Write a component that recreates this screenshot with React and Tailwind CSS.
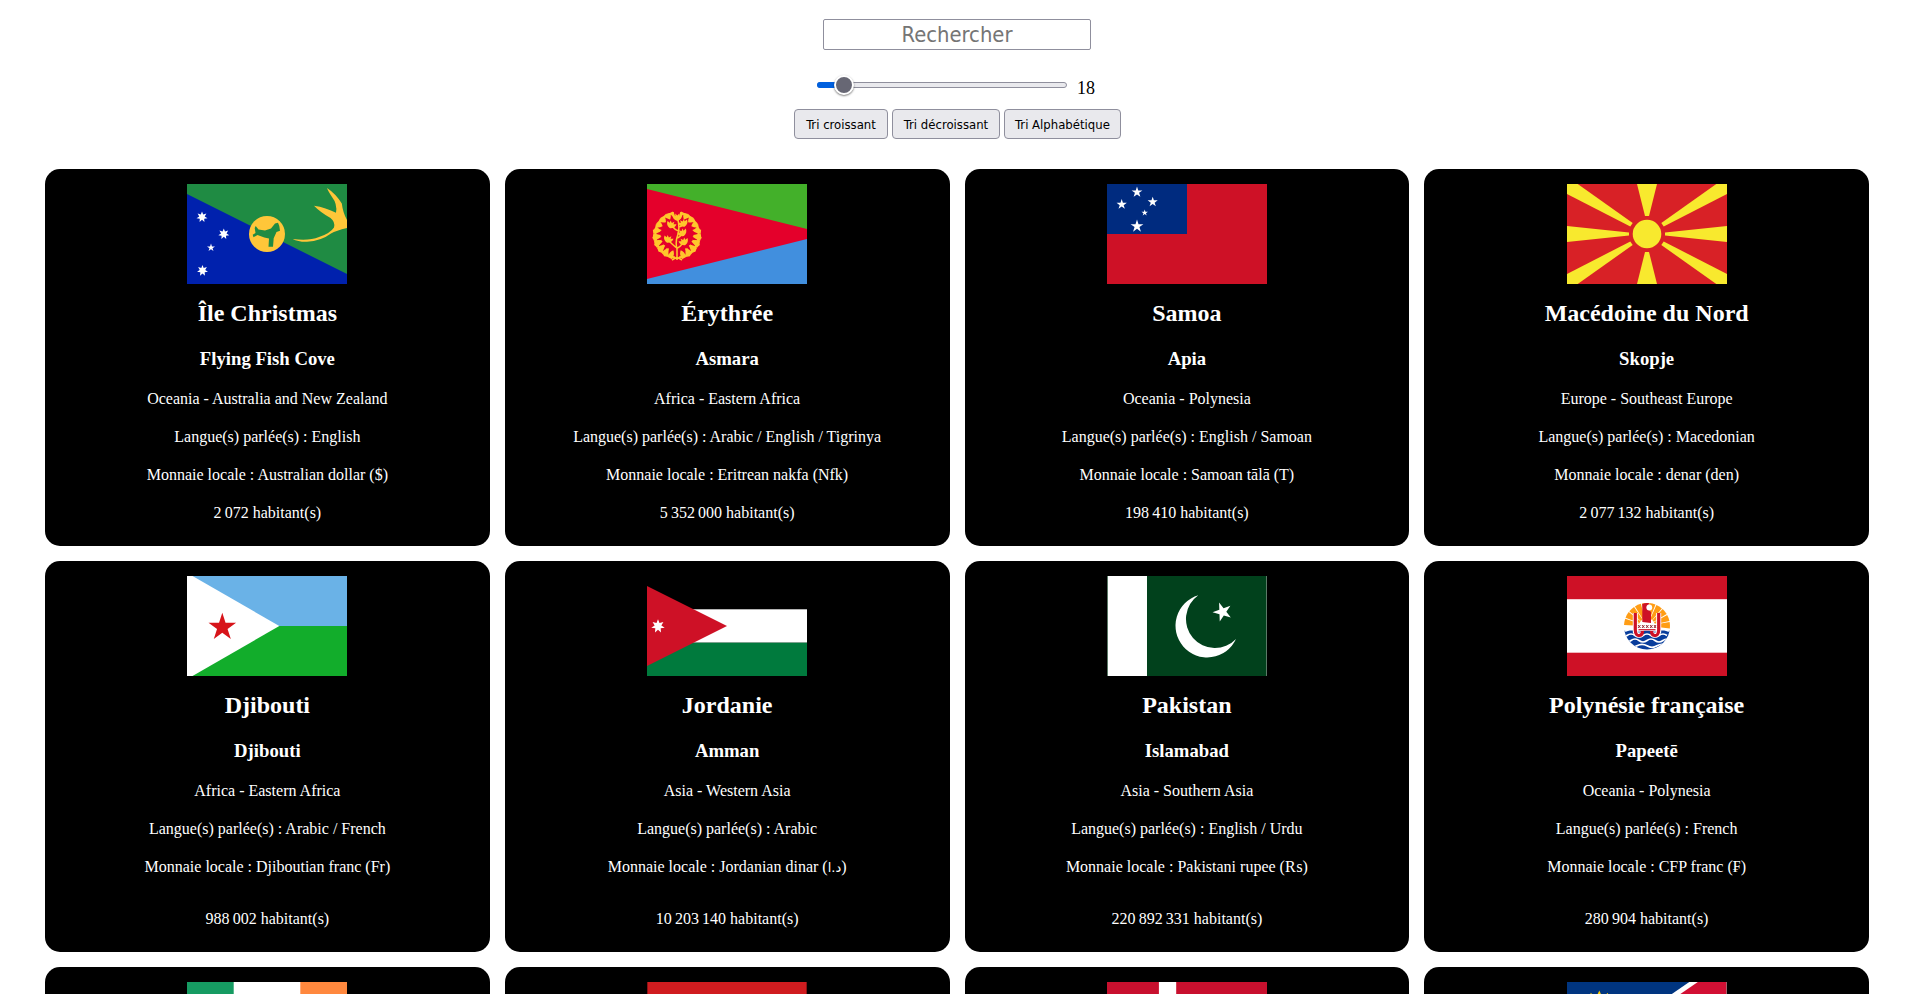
import React from "react";

function starPoints(cx, cy, r, n = 5, inner = 0.382, start = -90) {
  const pts = [];
  for (let i = 0; i < n * 2; i++) {
    const a = ((start + (i * 180) / n) * Math.PI) / 180;
    const rad = i % 2 ? r * inner : r;
    pts.push(`${(cx + rad * Math.cos(a)).toFixed(2)},${(cy + rad * Math.sin(a)).toFixed(2)}`);
  }
  return pts.join(" ");
}

function Star({ x, y, r, n, inner, start, fill = "#fff" }) {
  return <polygon points={starPoints(x, y, r, n, inner, start)} fill={fill} />;
}

function Christmas() {
  return (
    <>
      <rect width="160" height="100" fill="#1f8b43" />
      <path d="M0 10L160 90V100H0z" fill="#0021ad" />
      <Star x={15} y={33} r={5.6} n={7} inner={0.5} />
      <Star x={36.8} y={50} r={5.6} n={7} inner={0.5} />
      <Star x={24} y={63.7} r={4.2} />
      <Star x={15.5} y={86.6} r={5.6} n={7} inner={0.5} />
      <circle cx="80" cy="50" r="18" fill="#ffc639" />
      <path d="M68.7 42L71.5 45.5L78 46.5L84 44.5L88 39.5L91 38.8L92.3 42L93 46.7L89.5 48L86.7 54.3L86 62.7H81.5L82 54.5L77.3 53.5L70.5 51L66.5 53.2L65.7 50.7L68.5 49L67.7 44z" fill="#1f8b43" />
      <path d="M105.7 55Q122 57.2 132 53Q143 49.5 147 43.5Q148.5 38 143.5 34Q133 28 127 21.7Q139 23.5 149 28.8Q150.5 20 145 13Q141 7 140 4Q149 10 154.8 19.5Q156 29 160 36V44Q149 46.500 144 49.500Q134 57 120 57.800Q111 58 105.700 55z" fill="#ffc639" />
    </>
  );
}

function Eritrea() {
  const leaves = [];
  for (let i = 0; i < 9; i++) {
    const deg = 22 + i * 17.5;
    const a = (deg * Math.PI) / 180;
    leaves.push({ x: 21 * Math.sin(a), y: 21 * Math.cos(a), deg, k: i < 5 ? 1.1 : 0.85 });
  }
  const twigs = [
    [24.5, 40, 20], [36, 38.5, -20], [35, 48, -25], [21.5, 54.5, 20], [36.5, 57, -20], [30.3, 32.5, 0],
  ];
  return (
    <>
      <rect width="160" height="50" fill="#43b02a" />
      <rect y="50" width="160" height="50" fill="#418fde" />
      <path d="M0 5L160 45V55L0 95z" fill="#e4002b" />
      <g fill="#ffc72c">
        {[1, -1].map((s) => (
          <g key={s} transform={`translate(30 51) scale(${s} 1)`}>
            {leaves.map((l) => (
              <g key={l.deg} transform={`translate(${l.x} ${l.y}) rotate(${-l.deg}) scale(${l.k})`}>
                <path d="M-4 3Q-5-2-2-5Q1-2 .3 2.500z" />
                <path d="M4 3Q5.500-2 4-5Q.5-2 .3 2.500z" />
              </g>
            ))}
          </g>
        ))}
        {twigs.map(([x, y, r]) => (
          <path key={`${x}-${y}`} transform={`translate(${x} ${y}) rotate(${r})`} d="M0 4.500Q-4.800 3-4.800-1.500L-2-.5L-2-3L0-1L2-3L2-.5L4.800-1.500Q4.800 3 0 4.500z" />
        ))}
      </g>
      <path d="M30 76V65Q28 58 31 50Q33 43 30.500 34M30 64Q27 62 22 57M30.500 64Q33 63 36 59M30.500 54Q33 53 35 50M31.500 47Q28 46 25 42M32 43Q34 43 36 40M25 76L30 73L35 76" fill="none" stroke="#ffc72c" strokeWidth="1.5" />
      <path d="M28 73.500A22.500 22.500 0 0 1 27 29M32 73.500A22.500 22.500 0 0 0 33 29" fill="none" stroke="#ffc72c" strokeWidth="2" />
    </>
  );
}

function Samoa() {
  return (
    <>
      <rect width="160" height="100" fill="#ce1126" />
      <rect width="80" height="50" fill="#002b7f" />
      <Star x={30} y={8.2} r={5.7} />
      <Star x={14.7} y={20.5} r={5.4} />
      <Star x={45.7} y={18} r={5.3} />
      <Star x={37.7} y={28.8} r={3.4} />
      <Star x={30} y={42.3} r={6.7} />
    </>
  );
}

function Macedonia() {
  const ray = "M0 0H10.7L65.7 39L63.3 42.500L0 10z";
  return (
    <>
      <rect width="160" height="100" fill="#d82126" />
      <g fill="#f8e92e">
        <path d="M70 0H90L82 32H78zM70 100H90L82 68H78zM0 42L62 48.500V51.500L0 58zM160 42L98 48.500V51.500L160 58z" />
        <path d={ray} />
        <path d={ray} transform="matrix(-1 0 0 1 160 0)" />
        <path d={ray} transform="matrix(1 0 0 -1 0 100)" />
        <path d={ray} transform="matrix(-1 0 0 -1 160 100)" />
        <circle cx="80" cy="50" r="14.3" />
      </g>
    </>
  );
}

function DjiboutiFlag() {
  return (
    <>
      <rect width="160" height="50" fill="#6ab2e7" />
      <rect y="50" width="160" height="50" fill="#12ad2b" />
      <path d="M0 0H5.500L92.300 50L5.500 100H0z" fill="#fff" />
      <Star x={35.3} y={51.2} r={14.5} fill="#d7141a" />
    </>
  );
}

function Jordan() {
  return (
    <>
      <rect width="160" height="100" fill="#000" />
      <rect y="33.300" width="160" height="33.400" fill="#fff" />
      <rect y="66.700" width="160" height="33.300" fill="#007a3d" />
      <path d="M0 10L80 50L0 90z" fill="#ce1126" />
      <Star x={11} y={50.2} r={6.9} n={7} inner={0.5} />
    </>
  );
}

function PakistanFlag() {
  return (
    <>
      <rect width="160" height="100" fill="#01411c" />
      <rect width="40" height="100" fill="#fff" />
      <path d="M91.300 19.300A31.700 31.700 0 1 0 129 63A29 29 0 1 1 91.300 19.300z" fill="#fff" />
      <path d="M.5 0V100M159.500 0V100" stroke="#5b7a67" />
      <Star x={115.5} y={36} r={10} start={178} />
    </>
  );
}

function Polynesia() {
  const rays = [0, 1, 2, 3, 4, 5, 6, 7, 8, 9];
  const pt = (deg, r) => `${80 + r * Math.cos((deg * Math.PI) / 180)} ${50 - r * Math.sin((deg * Math.PI) / 180)}`;
  return (
    <>
      <rect width="160" height="100" fill="#fff" />
      <rect width="160" height="23.200" fill="#ce1126" />
      <rect y="76.700" width="160" height="23.300" fill="#ce1126" />
      {rays.map((i) => (
        <path key={i} d={`M${pt(i * 18.6 - 6, 8)}L${pt(i * 18.6 - 6, 23)}A23 23 0 0 0 ${pt(i * 18.6 + 10, 23)}L${pt(i * 18.6 + 10, 8)}z`} fill="#ff9d15" />
      ))}
      <clipPath id="sea"><circle cx="80" cy="50.500" r="23" /></clipPath>
      <g clipPath="url(#sea)">
        <rect x="56" y="54.500" width="48" height="20" fill="#083d9c" />
        <path d="M54 54q4 2 7 0t7 0t8 0t8 0t8 0t7 0t7 0M52 59.500q4 3 8 0t8 0t8 0t8 0t8 0t8 0M56 64.500q4 3 8 0t8 0t8 0t8 0t8 0t8 0M60 69.800q5 3 10 0t10 0t10 0t10 0" fill="none" stroke="#fff" strokeWidth="1.700" />
      </g>
      <path d="M70 47.500H90V54.500H70z" fill="#fff" />
      <path d="M75.300 46V28Q78 26.500 82 27L81 33L84 36V47z" fill="#ce1126" />
      <circle cx="82.300" cy="31.500" r="2.900" fill="#fff" />
      <path d="M68.300 37V56Q69 60 75 58.500M91.700 37V56Q91 60 85 58.500" fill="none" stroke="#fff" strokeWidth="5" />
      <path d="M68.300 37V54Q68.500 60 72.500 59.500Q75.500 59 75.500 55M91.700 37V54Q91.500 60 87.500 59.500Q84.500 59 84.500 55" fill="none" stroke="#ce1126" strokeWidth="3.200" />
      <path d="M71.500 53.700H88.500" stroke="#ce1126" strokeWidth="1.200" />
      <path d="M71 49l2.500 3m0-3l-2.500 3m4 0l2.500-3m0 3l-2.500-3m4 0l2.500 3m0-3l-2.500 3m4 0l2.500-3m0 3l-2.500-3m4 0l2 3m0-3l-2 3" stroke="#8c1a24" strokeWidth=".9" />
    </>
  );
}

function Ireland() {
  return (
    <>
      <rect width="160" height="100" fill="#fff" />
      <rect width="46.700" height="100" fill="#169b62" />
      <rect x="113.300" width="46.700" height="100" fill="#ff883e" />
    </>
  );
}

function RedField() {
  return (
    <>
      <rect width="160" height="100" fill="#8b1214" />
      <rect x="1" width="158" height="100" fill="#d01c1f" />
    </>
  );
}

function Denmark() {
  return (
    <>
      <rect width="160" height="100" fill="#c8102e" />
      <path d="M51.900 0H69.200V42H160V58H69.200V100H51.900V58H0V42H51.900z" fill="#fff" />
    </>
  );
}

function Namibia() {
  return (
    <>
      <rect width="160" height="100" fill="#003580" />
      <path d="M122.300 0H160V100H0V84z" fill="#fff" />
      <path d="M130.800 0H160V12L30 100H0V90z" fill="#d21034" />
      <path d="M159.500 0V12" stroke="#a8606c" />
      <Star x={32.3} y={26} r={17.6} n={12} inner={0.65} fill="#ffce00" />
    </>
  );
}

const countries = [
  [Christmas, "Île Christmas", "Flying Fish Cove", "Oceania - Australia and New Zealand", "English", "Australian dollar", "$", "2\u202f072"],
  [Eritrea, "Érythrée", "Asmara", "Africa - Eastern Africa", "Arabic / English / Tigrinya", "Eritrean nakfa", "Nfk", "5\u202f352\u202f000"],
  [Samoa, "Samoa", "Apia", "Oceania - Polynesia", "English / Samoan", "Samoan tālā", "T", "198\u202f410"],
  [Macedonia, "Macédoine du Nord", "Skopje", "Europe - Southeast Europe", "Macedonian", "denar", "den", "2\u202f077\u202f132"],
  [DjiboutiFlag, "Djibouti", "Djibouti", "Africa - Eastern Africa", "Arabic / French", "Djiboutian franc", "Fr", "988\u202f002"],
  [Jordan, "Jordanie", "Amman", "Asia - Western Asia", "Arabic", "Jordanian dinar", "د.ا", "10\u202f203\u202f140"],
  [PakistanFlag, "Pakistan", "Islamabad", "Asia - Southern Asia", "English / Urdu", "Pakistani rupee", "₨", "220\u202f892\u202f331"],
  [Polynesia, "Polynésie française", "Papeetē", "Oceania - Polynesia", "French", "CFP franc", "₣", "280\u202f904"],
];

const nextRow = [Ireland, RedField, Denmark, Namibia];

function Flag({ art: Art }) {
  return (
    <svg width="160" height="100" viewBox="0 0 160 100" className="block shrink-0">
      <Art />
    </svg>
  );
}

function Card({ country, tall }) {
  const [art, name, capital, region, languages, currency, symbol, population] = country;
  return (
    <li className="flex flex-col items-center rounded-[15px] bg-black pt-[15px] pb-6 text-base leading-[18px] text-white">
      <Flag art={art} />
      <h2 className="mt-[15px] text-2xl leading-7 font-bold">{name}</h2>
      <h3 className="mt-[21px] text-[18.72px] leading-[22px] font-bold">{capital}</h3>
      <p className="mt-5">{region}</p>
      <p className="mt-5">Langue(s) parlée(s) : {languages}</p>
      <p className="mt-5 h-[18px] whitespace-nowrap">
        Monnaie locale : {currency} (
        {symbol === "د.ا" ? <bdi className="font-['DejaVu_Sans'] text-[13px] leading-none">{symbol}</bdi> : symbol})
      </p>
      <p className={tall ? "mt-[34px]" : "mt-5"}>{population} habitant(s)</p>
    </li>
  );
}

function SortButton({ children, className }) {
  return (
    <button className={`h-[30px] rounded-[4px] border border-[#8f8f9d] bg-[#e9e9ed] p-0 pt-px pl-px text-center font-['DejaVu_Sans_Condensed','DejaVu_Sans',sans-serif] text-[13px] leading-none whitespace-nowrap text-black ${className}`}>
      {children}
    </button>
  );
}

export default function App() {
  return (
    <div className="h-screen overflow-hidden bg-white font-['Liberation_Serif','DejaVu_Sans',serif] text-black">
      <header className="flex flex-col items-center pt-[19px]">
        <input
          placeholder="Rechercher"
          className="h-[31px] w-[268px] rounded-[2px] border border-[#8f8f9d] bg-white p-0 text-center font-['DejaVu_Sans_Condensed','DejaVu_Sans',sans-serif] text-[21.800px] leading-none outline-none placeholder:text-[#757575]"
        />
        <div className="mt-[25px] flex h-5 items-center gap-[10px] pr-[2px]">
          <div className="relative h-1.5 w-[250px] rounded-full border border-[#8f8f9d] bg-[#e9e9ed]">
            <div className="absolute -top-px -left-px h-1.5 w-[27px] rounded-l-full bg-[#0060df]" />
            <div className="absolute top-[-8px] left-[16px] size-5 rounded-full border-2 border-white bg-[#676774] shadow-[0_1px_2px_rgba(0,0,0,0.5)]" />
          </div>
          <span className="pt-1.5 text-lg leading-5">18</span>
        </div>
        <div className="mt-[14px] flex gap-1">
          <SortButton className="w-[94px]">Tri croissant</SortButton>
          <SortButton className="w-[108px]">Tri décroissant</SortButton>
          <SortButton className="w-[117px]">Tri Alphabétique</SortButton>
        </div>
      </header>
      <ul className="mx-[45px] mt-[30px] grid grid-cols-4 gap-[15px]">
        {countries.map((c, i) => (
          <Card key={c[1]} country={c} tall={i > 3} />
        ))}
        {nextRow.map((art, i) => (
          <li key={i} className="flex h-[377px] flex-col items-center rounded-[15px] bg-black pt-[15px]">
            <Flag art={art} />
          </li>
        ))}
      </ul>
    </div>
  );
}
